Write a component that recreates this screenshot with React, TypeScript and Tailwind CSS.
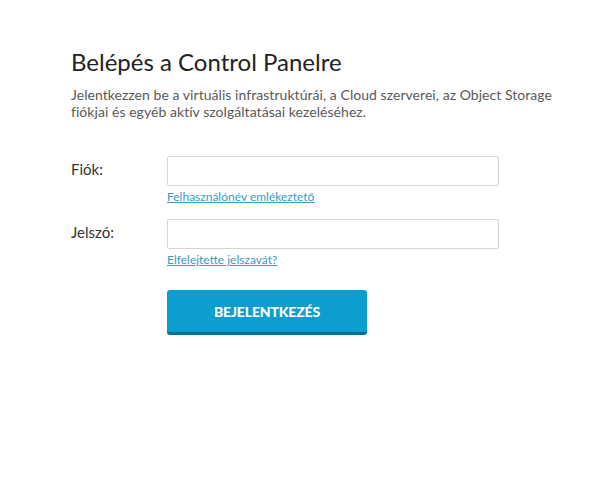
import React from "react";

const App: React.FC = () => {
  return (
    <div className="min-h-screen bg-white pl-[71px] pt-[47px] font-['Lato','Liberation_Sans',sans-serif]">
      <h1 className="text-[24px] leading-[30px] text-[#222]">Belépés a Control Panelre</h1>
      <p className="mt-[9px] w-[500px] text-[14px] leading-[17px] tracking-[0.05px] text-[#5a5a5a]">
        Jelentkezzen be a virtuális infrastruktúrái, a Cloud szerverei, az Object Storage fiókjai és egyéb aktív
        szolgáltatásai kezeléséhez.
      </p>

      <div className="mt-[36px] flex">
        <label className="w-[96px] pt-[4px] text-[15px] leading-[18px] text-[#333]">Fiók:</label>
        <div className="flex flex-col">
          <input type="text" className="h-[30px] w-[332px] rounded-[2px] border border-[#d5d5d5] bg-white px-2 outline-none" />
          <a href="#" className="mt-[3px] text-[12px] leading-[15px] text-[#3a9ac0] underline">
            Felhasználónév emlékeztető
          </a>
        </div>
      </div>

      <div className="mt-[15px] flex">
        <label className="w-[96px] pt-[4px] text-[15px] leading-[18px] text-[#333]">Jelszó:</label>
        <div className="flex flex-col">
          <input type="password" className="h-[30px] w-[332px] rounded-[2px] border border-[#d5d5d5] bg-white px-2 outline-none" />
          <a href="#" className="mt-[3px] text-[12px] leading-[15px] text-[#3a9ac0] underline">
            Elfelejtette jelszavát?
          </a>
        </div>
      </div>

      <div className="mt-[23px] pl-[96px]">
        <button className="h-[45px] w-[200px] rounded-[3px] border-b-[3px] border-[#0a6f93] bg-[#0d9ed0] text-[14px] font-black tracking-[-0.15px] text-white">
          BEJELENTKEZÉS
        </button>
      </div>
    </div>
  );
};

export default App;
